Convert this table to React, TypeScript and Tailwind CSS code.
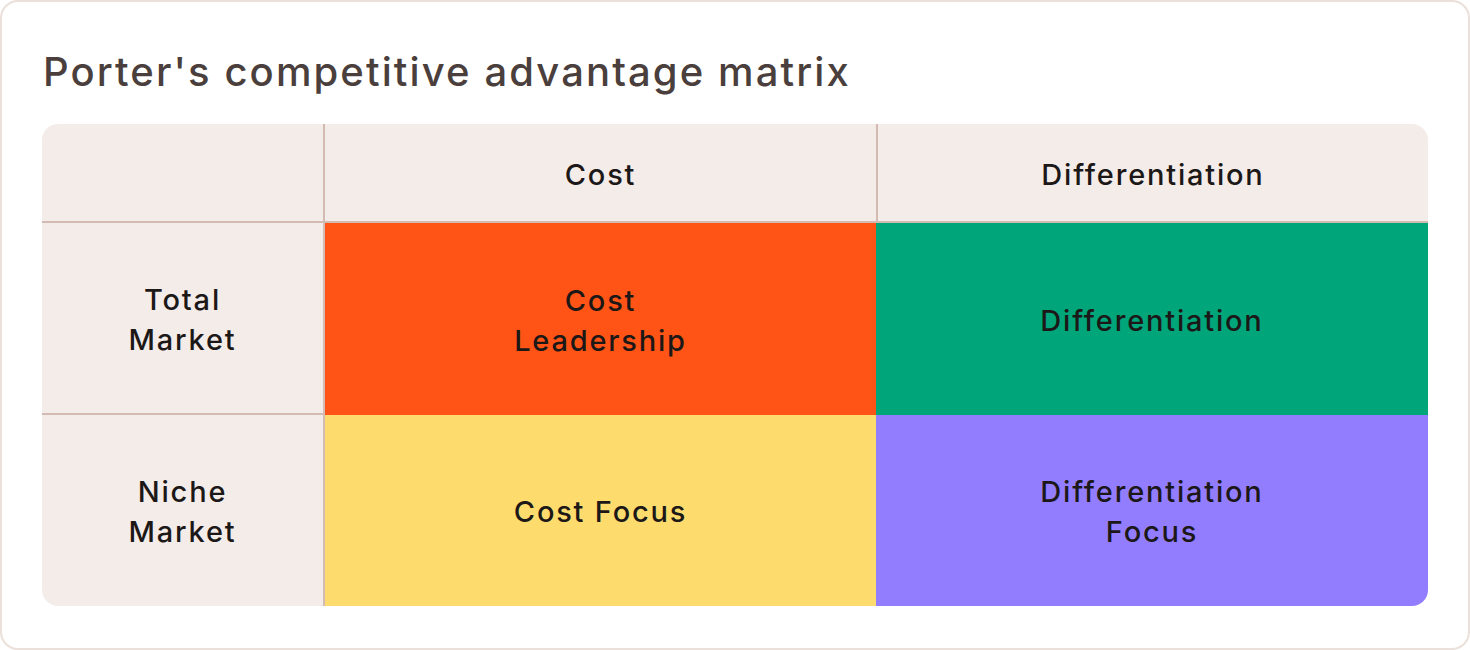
import React from "react";

const font = { fontFamily: "Inter, 'Noto Sans', sans-serif" };

export default function App() {
  return (
    <div className="w-[1470px] h-[650px] bg-white" style={font}>
      <div className="w-full h-full rounded-[18px] border-2 border-[#ebe0da] bg-white px-[40px] pt-[44px]">
        <h1 className="text-[40px] leading-[52px] font-medium text-[#4a3f3c] tracking-[2.1px] pl-[1px]">
          Porter's competitive advantage matrix
        </h1>
        <div className="mt-[26px] grid grid-cols-[283px_551px_552px] grid-rows-[99px_192px_191px] rounded-[16px] overflow-hidden text-[29px] leading-[40px] font-medium text-[#1c1817] text-center tracking-[1.8px]">
          <div className="bg-[#f4ece9] border-r-2 border-b-2 border-[#d3bbb4]" />
          <div className="bg-[#f4ece9] border-b-2 border-[#d3bbb4] flex items-center justify-center pt-[4px]">Cost</div>
          <div className="bg-[#f4ece9] border-b-2 border-l-2 border-[#d3bbb4] flex items-center justify-center pt-[4px]">Differentiation</div>

          <div className="bg-[#f4ece9] border-r-2 border-b-2 border-[#d3bbb4] flex items-center justify-center pt-[3px]">
            <span>Total<br />Market</span>
          </div>
          <div className="bg-[#ff5416] flex items-center justify-center pt-[3px]">
            <span>Cost<br />Leadership</span>
          </div>
          <div className="bg-[#00a57a] flex items-center justify-center pt-[3px]">Differentiation</div>

          <div className="bg-[#f4ece9] border-r-2 border-[#d3bbb4] flex items-center justify-center pt-[2px]">
            <span>Niche<br />Market</span>
          </div>
          <div className="bg-[#fddc6d] flex items-center justify-center pt-[2px]">Cost Focus</div>
          <div className="bg-[#937dff] flex items-center justify-center pt-[2px]">
            <span>Differentiation<br />Focus</span>
          </div>
        </div>
      </div>
    </div>
  );
}
